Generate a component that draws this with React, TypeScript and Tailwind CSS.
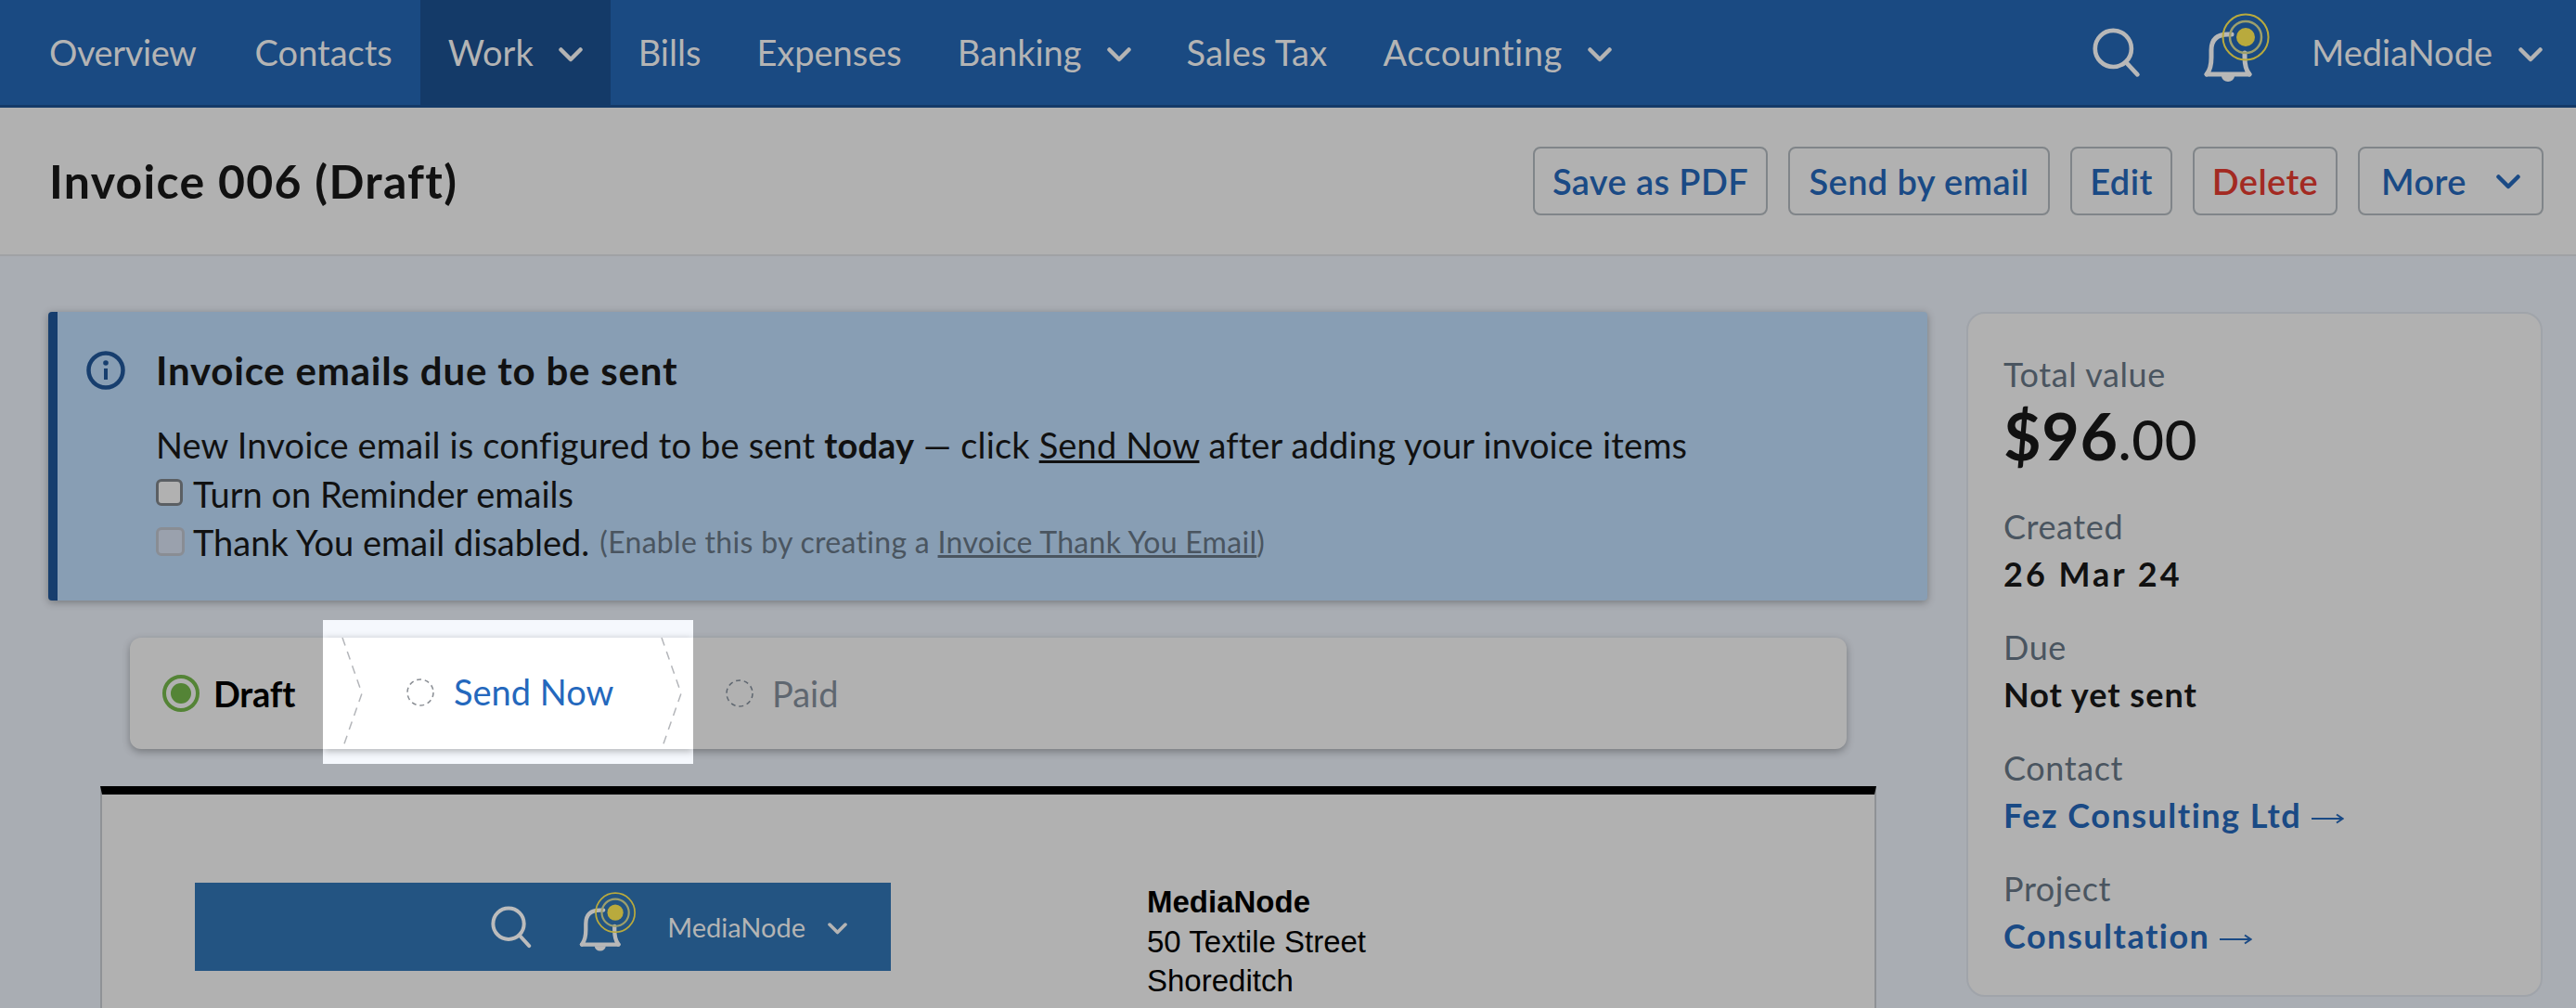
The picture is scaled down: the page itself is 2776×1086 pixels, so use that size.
import React from 'react';

const Chevron = ({ className }: { className: string }) => (
    <svg viewBox="0 0 26 16" fill="none" className={className}>
        <path d="M2.5 2.5 L13 13 L23.5 2.5" stroke="currentColor" strokeWidth="4.5" strokeLinecap="round" strokeLinejoin="round" />
    </svg>
);

const SearchIcon = ({ className }: { className: string }) => (
    <svg viewBox="0 0 58 60" fill="none" className={className}>
        <circle cx="24" cy="24" r="21" stroke="currentColor" strokeWidth="5" />
        <path d="M39 40 L52 54" stroke="currentColor" strokeWidth="5" strokeLinecap="round" />
    </svg>
);

const BellIcon = ({ className }: { className: string }) => (
    <svg viewBox="0 0 78 80" fill="none" className={className}>
        <path d="M7 68 Q12 62 12 50 V42 Q12 25 30 25 H34" stroke="#b8b8b8" strokeWidth="5" strokeLinecap="round" />
        <path d="M48 45 V50 Q48 62 53 68" stroke="#b8b8b8" strokeWidth="5" strokeLinecap="round" />
        <path d="M7 68 H53" stroke="#b8b8b8" strokeWidth="5" strokeLinecap="round" />
        <path d="M23 70 a7 6 0 0 0 14 0z" fill="#b8b8b8" />
        <circle cx="49" cy="28" r="24.5" stroke="#b9aa3d" strokeWidth="2" />
        <circle cx="49" cy="28" r="17" stroke="#9c9f6c" strokeWidth="2.5" />
        <circle cx="49" cy="28" r="10" fill="#b9aa3d" />
    </svg>
);

const StepChevron = ({ className }: { className: string }) => (
    <svg viewBox="0 0 24 120" fill="none" className={className}>
        <path d="M1 0 L22 60 L1 120" stroke="#b4b6ba" strokeWidth="1.5" strokeDasharray="9 7" />
    </svg>
);

const DashedCircle = ({ color }: { color: string }) => (
    <svg viewBox="0 0 30 30" fill="none" className="w-[30px] h-[30px] shrink-0">
        <circle cx="15" cy="15" r="14" stroke={color} strokeWidth="1.5" strokeDasharray="5 3.8" />
    </svg>
);

const LongArrow = () => (
    <svg viewBox="0 0 36 16" fill="none" className="inline-block w-[36px] h-[16px] ml-[10px] -mt-[2px]">
        <path d="M1 8 H34 M28 3.5 L34.5 8 L28 12.5" stroke="currentColor" strokeWidth="2" />
    </svg>
);

const NavItem = ({ label, active, caret, className }: { label: string; active?: boolean; caret?: boolean; className?: string }) => (
    <div className={`h-full flex items-center px-[30px] ${active ? 'bg-[#143a68]' : ''}`}>
        <span className={className}>{label}</span>
        {caret && <Chevron className="w-[26px] h-[16px] ml-[27px] mt-[4px]" />}
    </div>
);

const HeaderButton = ({ label, className, caret }: { label: string; className: string; caret?: boolean }) => (
    <button className={`h-[74px] flex items-center justify-center border-2 border-[#808589] rounded-[8px] font-semibold text-[38px] tracking-[0.4px] ${className}`}>
        {label}
        {caret && <Chevron className="w-[26px] h-[16px] ml-[32px] mt-[2px]" />}
    </button>
);

const SideField = ({ label, value, link, valueClass }: { label: string; value: string; link?: boolean; valueClass?: string }) => (
    <div className="mt-[28px] text-[36px] leading-[51px]">
        <div className="text-[#4a5560] tracking-[0.6px]">{label}</div>
        <div className={`font-bold ${valueClass ?? 'tracking-[1px]'} ${link ? 'text-[#1a4a85]' : 'text-[#111111]'}`}>
            {value}
            {link && <LongArrow />}
        </div>
    </div>
);

export default function App() {
    return (
        <div className="h-[1086px] overflow-hidden bg-[#a9adb3] [font-family:Lato,sans-serif]">
            {/* Top nav */}
            <nav className="h-[116px] flex items-center pl-[23px] pr-[36px] bg-[#1a4a82] border-b-[3px] border-[#143a68] text-[38px] text-[#b4b4b4]">
                <NavItem label="Overview" className="tracking-[-0.4px] mr-[3px]" />
                <NavItem label="Contacts" />
                <NavItem label="Work" active caret />
                <NavItem label="Bills" />
                <NavItem label="Expenses" />
                <NavItem label="Banking" caret />
                <NavItem label="Sales Tax" className="tracking-[0.3px]" />
                <NavItem label="Accounting" caret className="tracking-[0.5px]" />
                <div className="ml-auto flex items-center">
                    <SearchIcon className="w-[54px] h-[56px] text-[#b8b8b8] mt-[2px]" />
                    <BellIcon className="w-[78px] h-[80px] ml-[62px] -mt-[10px]" />
                    <span className="ml-[42px]">MediaNode</span>
                    <Chevron className="w-[26px] h-[16px] ml-[28px] mt-[4px]" />
                </div>
            </nav>

            {/* Title bar */}
            <header className="h-[160px] flex items-center justify-between pl-[53px] pr-[35px] bg-[#b1b1b1] border-b-2 border-[#a0a2a5]">
                <h1 className="text-[50px] font-bold text-[#111111] tracking-[1.3px]">Invoice 006 (Draft)</h1>
                <div className="flex gap-[22px]">
                    <HeaderButton label="Save as PDF" className="w-[253px] text-[#1a4a85]" />
                    <HeaderButton label="Send by email" className="w-[282px] text-[#1a4a85]" />
                    <HeaderButton label="Edit" className="w-[110px] text-[#1a4a85]" />
                    <HeaderButton label="Delete" className="w-[156px] text-[#a32a22]" />
                    <HeaderButton label="More" caret className="w-[200px] text-[#1a4a85]" />
                </div>
            </header>

            <div className="flex pt-[60px] pl-[52px]">
                <main className="w-[2025px] shrink-0">
                    {/* Alert */}
                    <div className="h-[311px] flex bg-[#889eb4] border-l-[10px] border-[#173e6e] rounded-[4px] shadow-[0_2px_8px_rgba(0,0,0,0.3)] pl-[31px] pt-[42px] text-[38px] text-[#111111]">
                        <svg viewBox="0 0 42 42" fill="none" className="w-[42px] h-[42px] shrink-0">
                            <circle cx="21" cy="21" r="18.5" stroke="#173e6e" strokeWidth="4.5" />
                            <circle cx="21" cy="13" r="2.8" fill="#173e6e" />
                            <path d="M21 19 V31" stroke="#173e6e" strokeWidth="4" />
                        </svg>
                        <div className="ml-[33px]">
                            <h2 className="text-[42px] font-bold leading-[42px] tracking-[0.8px]">Invoice emails due to be sent</h2>
                            <p className="mt-[33px] leading-[52px] tracking-[0.16px]">
                                New Invoice email is configured to be sent <b>today</b> — click <u>Send Now</u> after adding your invoice items
                            </p>
                            <label className="flex items-center leading-[52px] mt-[1px]">
                                <span className="w-[29px] h-[29px] rounded-[6px] border-[3px] border-[#5b5f63] bg-[#b1b1b1] mr-[11px] -mt-[4px]" />
                                Turn on Reminder emails
                            </label>
                            <label className="flex items-center leading-[52px]">
                                <span className="w-[31px] h-[31px] rounded-[6px] border-[3px] border-[#898d94] bg-[#9aa1ad] mr-[9px] -mt-[2px]" />
                                Thank You email disabled.
                                <span className="ml-[11px] text-[32px] text-[#4a5560] tracking-[0.3px]">
                                    (Enable this by creating a <u>Invoice Thank You Email</u>)
                                </span>
                            </label>
                        </div>
                    </div>

                    {/* Steps */}
                    <div className="ml-[88px] mt-[40px] w-[1850px] h-[120px] flex items-stretch rounded-[12px] bg-[#b1b1b1] shadow-[0_3px_8px_rgba(0,0,0,0.3)] text-[38px]">
                        <div className="w-[208px] shrink-0 flex items-center pl-[35px]">
                            <span className="w-[40px] h-[40px] rounded-full border-[4px] border-[#548436] flex items-center justify-center shrink-0">
                                <span className="w-[22px] h-[22px] rounded-full bg-[#548436]" />
                            </span>
                            <span className="ml-[15px] font-bold text-black tracking-[-0.2px]">Draft</span>
                        </div>
                        <div className="relative -mt-[19px] -mb-[16px] w-[399px] shrink-0 overflow-hidden bg-[#f5f8fd] flex items-center pl-[90px]">
                            <div className="absolute inset-x-0 top-[19px] bottom-[16px] bg-white shadow-[0_2px_8px_rgba(0,0,0,0.3)]" />
                            <StepChevron className="absolute left-[20px] top-[19px] w-[24px] h-[120px]" />
                            <StepChevron className="absolute left-[364px] top-[19px] w-[24px] h-[120px]" />
                            <div className="relative flex items-center">
                                <DashedCircle color="#8a8e94" />
                                <span className="ml-[21px] text-[#2468bd]">Send Now</span>
                            </div>
                        </div>
                        <div className="flex items-center pl-[35px]">
                            <DashedCircle color="#5f6770" />
                            <span className="ml-[20px] text-[#5f6770]">Paid</span>
                        </div>
                    </div>

                    {/* Invoice paper */}
                    <div className="ml-[56px] mt-[40px] w-[1914px] h-[400px] bg-[#b1b1b1] border-t-[9px] border-x-2 border-t-black border-x-[#8f9296] flex items-start pl-[100px] pt-[95px]">
                        <div className="w-[750px] h-[95px] shrink-0 bg-[#235482] flex items-center justify-end pr-[47px] text-[#b4b4b4] text-[29px]">
                            <SearchIcon className="w-[46px] h-[48px] text-[#bcbcbc] mt-[2px]" />
                            <BellIcon className="w-[67px] h-[69px] ml-[46px] -mt-[10px]" />
                            <span className="ml-[31px]">MediaNode</span>
                            <Chevron className="w-[21px] h-[13px] ml-[24px] mt-[4px]" />
                        </div>
                        <address className="ml-[276px] not-italic text-[33px] leading-[42.5px] text-black [font-family:'Liberation_Sans',sans-serif]">
                            <b>MediaNode</b>
                            <br />
                            50 Textile Street
                            <br />
                            Shoreditch
                        </address>
                    </div>
                </main>

                {/* Side summary */}
                <aside className="ml-[42px] w-[621px] h-[738px] shrink-0 rounded-[20px] bg-[#b1b1b1] border-2 border-[#a0a4aa] pl-[38px] pt-[40px]">
                    <div className="text-[36px] leading-[50px] text-[#4a5560] tracking-[0.6px]">Total value</div>
                    <div className="font-bold text-[#111111] leading-[82px] text-[70px] tracking-[0.6px]">
                        $96<span className="font-medium text-[60px]">.00</span>
                    </div>
                    <SideField label="Created" value="26 Mar 24" valueClass="tracking-[3px]" />
                    <SideField label="Due" value="Not yet sent" />
                    <SideField label="Contact" value="Fez Consulting Ltd" link valueClass="tracking-[1.5px]" />
                    <SideField label="Project" value="Consultation" link valueClass="tracking-[1.5px]" />
                </aside>
            </div>
        </div>
    );
}
